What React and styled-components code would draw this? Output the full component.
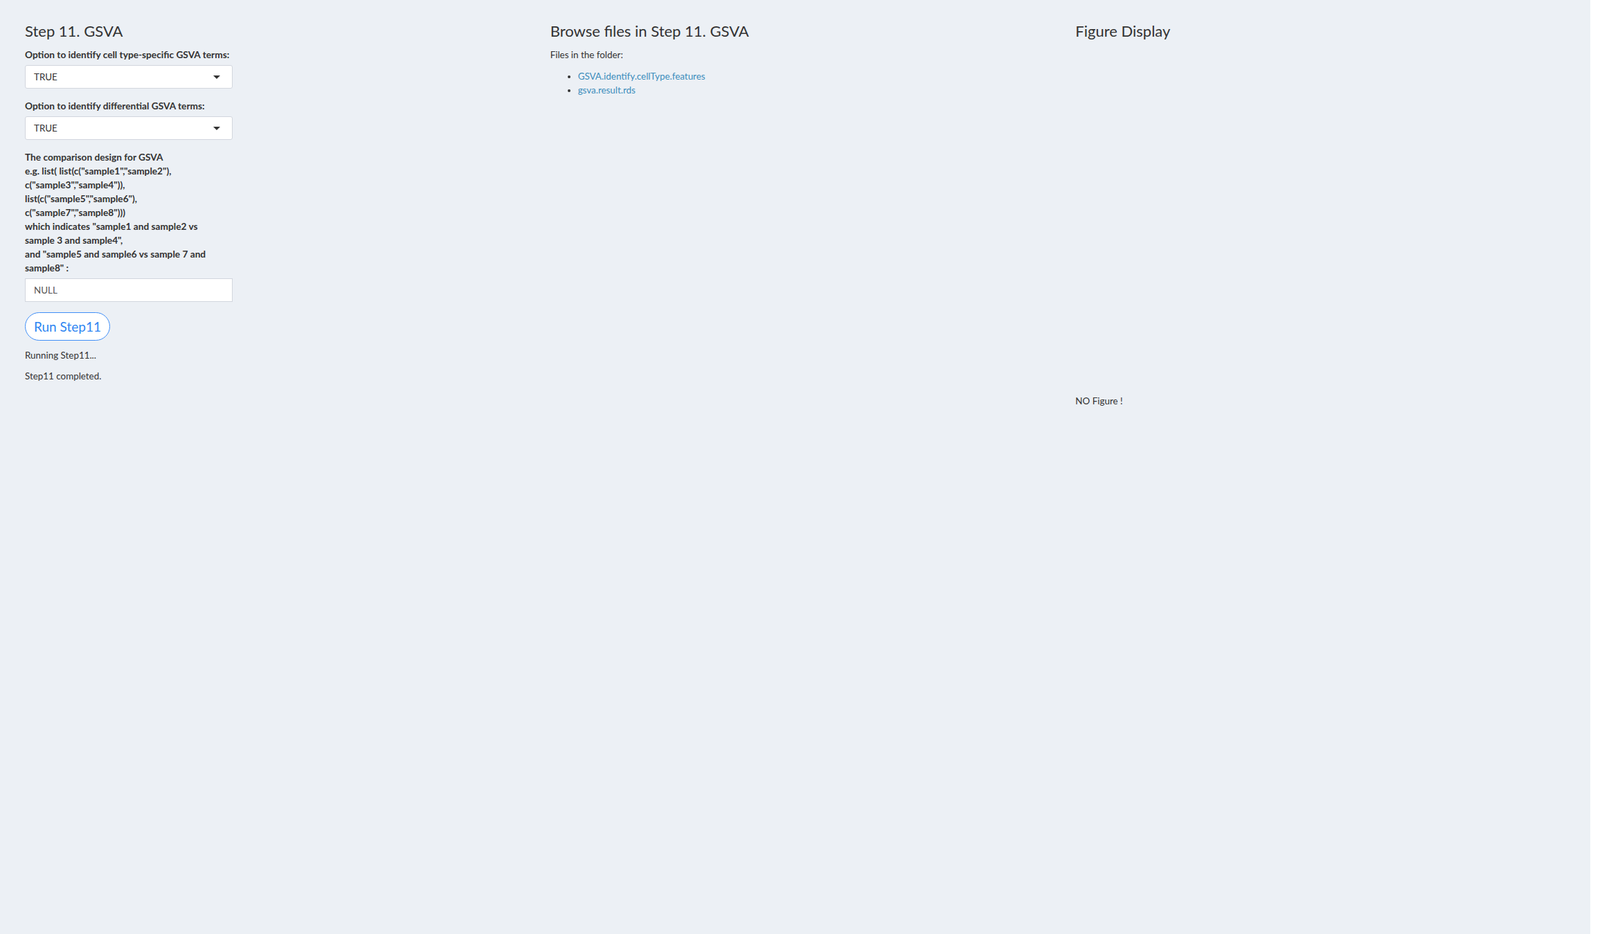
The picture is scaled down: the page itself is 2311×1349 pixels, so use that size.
import React from "react";
import styled, { createGlobalStyle } from "styled-components";

const GlobalStyle = createGlobalStyle`
  html, body {
    margin: 0;
    padding: 0;
    background: #ffffff;
  }
  body {
    font-family: Lato, "Open Sans", sans-serif;
    font-size: 13.4px;
    color: #333333;
  }
`;

function App() {
  return (
    <>
      <GlobalStyle />
      <Page>
        <Row>
          <Column>
            <Heading>Step 11. GSVA</Heading>
            <Field>
              <Label>Option to identify cell type-specific GSVA terms:</Label>
              <SelectBox>
                <span>TRUE</span>
                <Caret />
              </SelectBox>
            </Field>
            <Field>
              <Label>Option to identify differential GSVA terms:</Label>
              <SelectBox>
                <span>TRUE</span>
                <Caret />
              </SelectBox>
            </Field>
            <Field>
              <Label $maxWidth={285}>
                The comparison design for GSVA
                <br />
                e.g. list( list(c("sample1","sample2"),
                <br />
                c("sample3","sample4")),
                <br />
                list(c("sample5","sample6"),
                <br />
                c("sample7","sample8")))
                <br />
                which indicates "sample1 and sample2 vs sample 3 and sample4",
                <br />
                and "sample5 and sample6 vs sample 7 and sample8" :
              </Label>
              <TextInput type="text" defaultValue="NULL" />
            </Field>
            <RunButton>Run Step11</RunButton>
            <Status>Running Step11...</Status>
            <Status>Step11 completed.</Status>
          </Column>

          <Column>
            <Heading>Browse files in Step 11. GSVA</Heading>
            <Text>Files in the folder:</Text>
            <FileList>
              <li>
                <FileLink href="#">GSVA.identify.cellType.features</FileLink>
              </li>
              <li>
                <FileLink href="#">gsva.result.rds</FileLink>
              </li>
            </FileList>
          </Column>

          <Column>
            <Heading>Figure Display</Heading>
            <PlotArea />
            <Text>NO Figure !</Text>
          </Column>
        </Row>
      </Page>
    </>
  );
}

export default App;

const Page = styled.div`
  width: calc(100% - 14px);
  min-height: 100vh;
  background-color: #ecf0f5;
  box-sizing: border-box;
  padding: 0 0 0 21px;
`;

const Row = styled.div`
  display: grid;
  grid-template-columns: repeat(3, 1fr);
`;

const Column = styled.div`
  padding: 0 15px;
  min-width: 0;
`;

const Heading = styled.h3`
  font-family: Lato, "Open Sans", sans-serif;
  font-weight: 400;
  font-size: 22px;
  line-height: 1.1;
  margin: 33px 0 12px;
  color: #333333;
`;

const Field = styled.div`
  width: 300px;
  margin-bottom: 15px;
`;

const Label = styled.label`
  display: block;
  max-width: ${(p) => (p.$maxWidth ? `${p.$maxWidth}px` : "none")};
  font-weight: 700;
  font-size: 13.7px;
  line-height: 20px;
  margin-bottom: 5px;
  color: #333333;
`;

const SelectBox = styled.div`
  display: flex;
  align-items: center;
  justify-content: space-between;
  height: 34px;
  box-sizing: border-box;
  padding: 0 17px 0 12px;
  background: #ffffff;
  border: 1px solid #d2d6de;
  border-radius: 3px;
  font-size: 13.4px;
  color: #333333;
`;

const Caret = styled.span`
  width: 0;
  height: 0;
  border-left: 5px solid transparent;
  border-right: 5px solid transparent;
  border-top: 5px solid #333333;
`;

const TextInput = styled.input`
  display: block;
  width: 100%;
  height: 34px;
  box-sizing: border-box;
  padding: 0 12px;
  border: 1px solid #d2d6de;
  border-radius: 0;
  background: #ffffff;
  font-family: Lato, "Open Sans", sans-serif;
  font-size: 13.4px;
  color: #555555;
  outline: none;
`;

const RunButton = styled.button`
  display: block;
  height: 41px;
  padding: 0 12px;
  margin: 0 0 11px;
  background: #ffffff;
  border: 1.5px solid #3f8ef7;
  border-radius: 21px;
  font-family: Lato, "Open Sans", sans-serif;
  font-size: 19px;
  color: #2f86f2;
  cursor: pointer;
`;

const Status = styled.div`
  font-size: 13.4px;
  line-height: 20px;
  margin-bottom: 10px;
  color: #333333;
`;

const Text = styled.p`
  font-size: 13.4px;
  line-height: 20px;
  margin: 0 0 11px;
  color: #333333;
`;

const FileList = styled.ul`
  margin: 0;
  padding-left: 40px;
  font-size: 13.4px;
  line-height: 20px;
`;

const FileLink = styled.a`
  color: #3c8dbc;
  text-decoration: none;
`;

const PlotArea = styled.div`
  height: 500px;
`;
